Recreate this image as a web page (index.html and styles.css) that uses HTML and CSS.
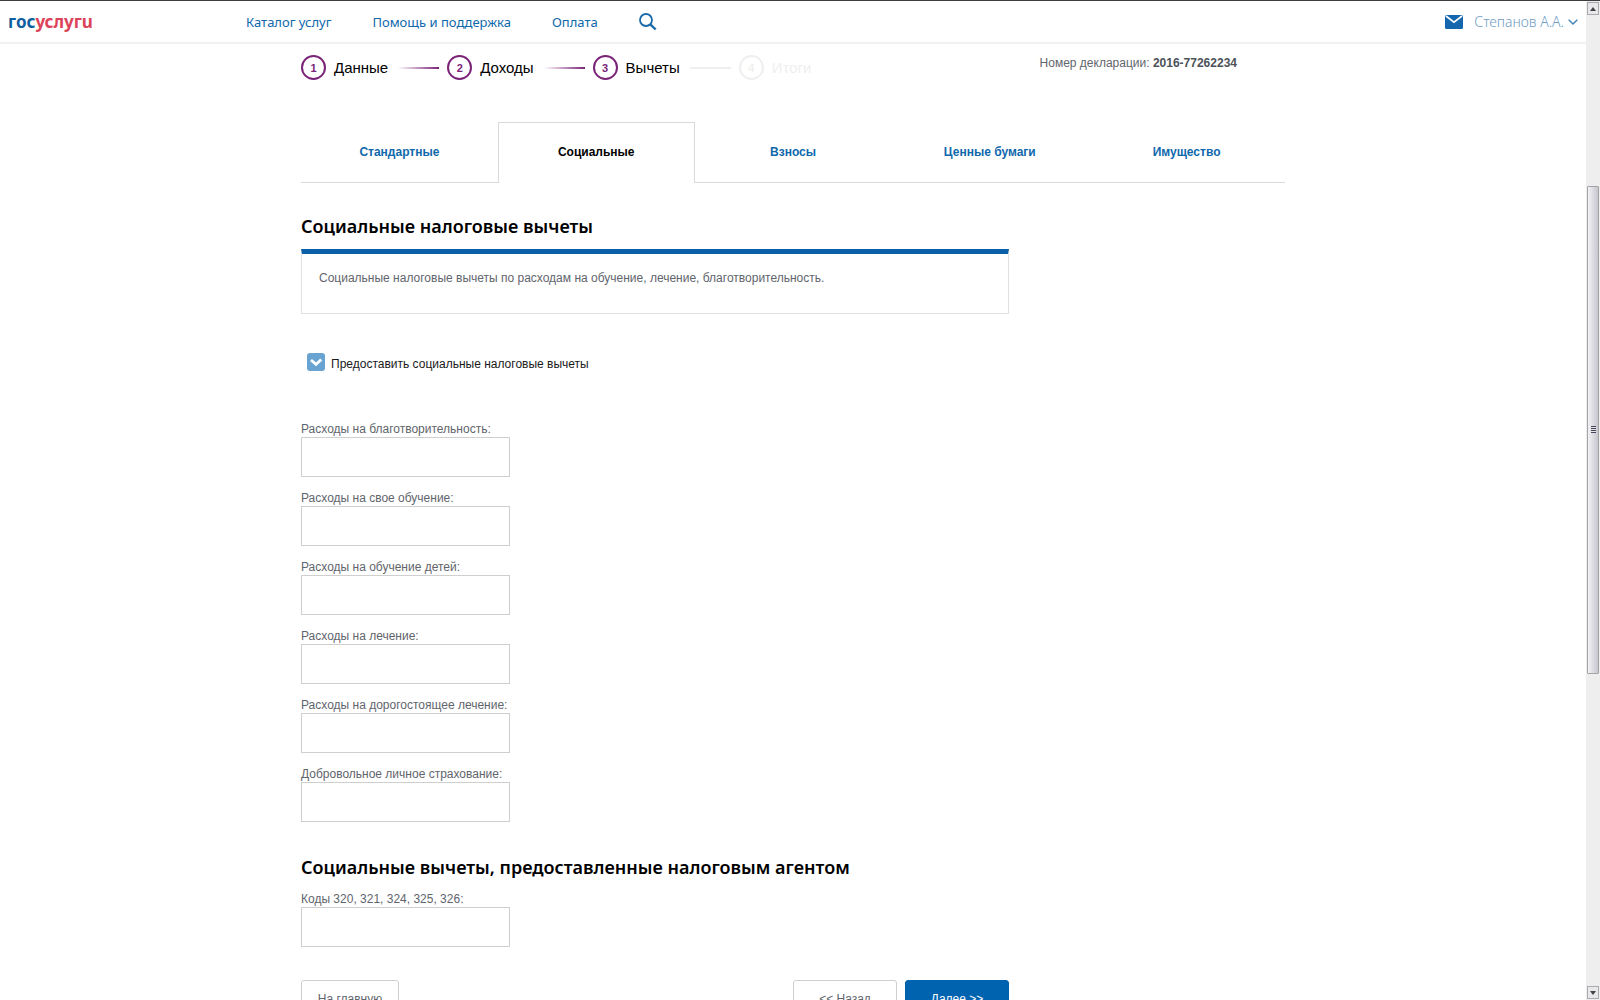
FILE: index.html
```html
<!DOCTYPE html>
<html lang="ru">
<head>
    <meta charset="UTF-8">
    <meta name="viewport" content="width=device-width, initial-scale=1.0">
    <title>Социальные налоговые вычеты</title>
    <link rel="stylesheet" href="styles.css">
</head>
<body>
    <div class="page">
        <header class="header">
            <a href="#" class="logo"><span class="logo-blue">гос</span><span class="logo-red">услугu</span></a>
            <nav class="nav">
                <a href="#">Каталог услуг</a>
                <a href="#">Помощь и поддержка</a>
                <a href="#">Оплата</a>
                <button type="button" class="search-btn" aria-label="Поиск">
                    <svg width="18" height="18" viewBox="0 0 18 18" fill="none" stroke="#1a6aa9" stroke-width="1.8">
                        <circle cx="7" cy="7" r="6"/>
                        <path d="M11.3 11.3l5.4 5.2" stroke-width="2.4"/>
                    </svg>
                </button>
            </nav>
            <div class="user">
                <a href="#" class="mail" aria-label="Сообщения">
                    <svg width="18" height="14" viewBox="0 0 18 14">
                        <rect width="18" height="14" rx="1.5" fill="#1567ad"/>
                        <path d="M1 1l8 6.2L17 1" fill="none" stroke="#fff" stroke-width="1.6"/>
                    </svg>
                </a>
                <a href="#" class="user-name">Степанов А.А.
                    <svg width="10" height="6" viewBox="0 0 10 6" fill="none" stroke="#3d82b8" stroke-width="1.4">
                        <path d="M.7.7L5 5 9.3.7"/>
                    </svg>
                </a>
            </div>
        </header>

        <main class="container">
            <div class="top-row">
                <ol class="steps">
                    <li class="step"><span class="num">1</span>Данные</li>
                    <li class="step"><span class="num">2</span>Доходы</li>
                    <li class="step"><span class="num">3</span>Вычеты</li>
                    <li class="step disabled"><span class="num">4</span>Итоги</li>
                </ol>
                <div class="doc-number">Номер декларации: <b>2016-77262234</b></div>
            </div>

            <nav class="tabs">
                <a href="#" class="tab">Стандартные</a>
                <a href="#" class="tab active">Социальные</a>
                <a href="#" class="tab">Взносы</a>
                <a href="#" class="tab">Ценные бумаги</a>
                <a href="#" class="tab">Имущество</a>
            </nav>

            <form class="form">
                <h2>Социальные налоговые вычеты</h2>
                <div class="info">Социальные налоговые вычеты по расходам на обучение, лечение, благотворительность.</div>

                <label class="check">
                    <input type="checkbox" checked>
                    <svg class="check-mark" width="18" height="18" viewBox="0 0 18 18" fill="none" stroke="#fff" stroke-width="2.8">
                        <path d="M4 7l5 4.4L14.2 6.4"/>
                    </svg>
                    <span>Предоставить социальные налоговые вычеты</span>
                </label>

                <div class="fields">
                    <div class="field">
                        <label for="charity">Расходы на благотворительность:</label>
                        <input type="text" id="charity">
                    </div>
                    <div class="field">
                        <label for="ownStudy">Расходы на свое обучение:</label>
                        <input type="text" id="ownStudy">
                    </div>
                    <div class="field">
                        <label for="childStudy">Расходы на обучение детей:</label>
                        <input type="text" id="childStudy">
                    </div>
                    <div class="field">
                        <label for="treatment">Расходы на лечение:</label>
                        <input type="text" id="treatment">
                    </div>
                    <div class="field">
                        <label for="costlyTreatment">Расходы на дорогостоящее лечение:</label>
                        <input type="text" id="costlyTreatment">
                    </div>
                    <div class="field">
                        <label for="insurance">Добровольное личное страхование:</label>
                        <input type="text" id="insurance">
                    </div>
                </div>

                <h2 class="agent-title">Социальные вычеты, предоставленные налоговым агентом</h2>
                <div class="field">
                    <label for="codes">Коды 320, 321, 324, 325, 326:</label>
                    <input type="text" id="codes">
                </div>

                <div class="buttons">
                    <button type="button" class="btn btn-home">На главную</button>
                    <button type="button" class="btn">&lt;&lt; Назад</button>
                    <button type="submit" class="btn btn-next">Далее &gt;&gt;</button>
                </div>
            </form>
        </main>
    </div>

    <!-- Scrollbar -->
    <div class="scrollbar" aria-hidden="true">
        <div class="scroll-arrow"><svg width="6" height="4" viewBox="0 0 6 4"><path d="M0 4l3-4 3 4z" fill="#444"/></svg></div>
        <div class="scroll-space-top"></div>
        <div class="scroll-thumb"><span class="grip"></span></div>
        <div class="scroll-space-bottom"></div>
        <div class="scroll-arrow"><svg width="6" height="4" viewBox="0 0 6 4"><path d="M0 0l3 4 3-4z" fill="#444"/></svg></div>
    </div>
</body>
</html>
```

FILE: styles.css
```css
* {
    box-sizing: border-box;
}

body {
    margin: 0;
    height: 100vh;
    display: flex;
    overflow: hidden;
    border-top: 1px solid #3c3b40;
    background: #fff;
    font-family: "Liberation Sans", Arial, sans-serif;
    font-size: 12px;
    line-height: 16px;
    color: #5f656c;
}

a {
    color: #0f68ac;
    text-decoration: none;
}

.page {
    flex: 1;
    min-width: 0;
    overflow: hidden;
}

/* Header */
.header {
    display: flex;
    align-items: center;
    height: 43px;
    padding: 0 8px;
    border-bottom: 2px solid #f2f2f2;
    font-family: "Noto Sans", sans-serif;
    font-size: 13px;
    line-height: 20px;
}

.logo {
    width: 238px;
    font-size: 17px;
    font-weight: 700;
}

.logo-blue {
    color: #0f5f9f;
}

.logo-red {
    color: #dc4359;
}

.nav {
    display: flex;
    align-items: center;
    gap: 41px;
}

.search-btn {
    display: flex;
    padding: 0;
    border: none;
    background: none;
    cursor: pointer;
}

.user {
    display: flex;
    align-items: center;
    gap: 11px;
    margin-left: auto;
}

.mail {
    display: flex;
}

.user-name {
    display: flex;
    align-items: center;
    gap: 4px;
    font-size: 14px;
    font-weight: 300;
    color: #6e9cc4;
}

/* Steps */
.container {
    max-width: 984px;
    margin: 0 auto;
}

.top-row {
    display: flex;
    justify-content: space-between;
    padding: 11px 48px 0 0;
}

.steps {
    display: flex;
    gap: 10px;
    margin: 0;
    padding: 0;
    list-style: none;
    font-size: 15px;
    color: #000;
}

.step {
    display: flex;
    align-items: center;
    gap: 8px;
    height: 25px;
}

.step + .step::before {
    content: "";
    width: 41px;
    height: 2px;
    background: linear-gradient(to right, #fff, #7a2478);
}

.num {
    display: flex;
    align-items: center;
    justify-content: center;
    width: 25px;
    height: 25px;
    border: 2px solid #7a2478;
    border-radius: 50%;
    font-size: 11px;
    font-weight: 700;
    color: #7a2478;
}

.step.disabled,
.step.disabled .num {
    color: #efefef;
    border-color: #efefef;
}

.step.disabled::before {
    background: #efefef;
}

.doc-number b {
    color: #4c5258;
}

/* Tabs */
.tabs {
    display: grid;
    grid-template-columns: repeat(5, 1fr);
    margin-top: 42px;
}

.tab {
    height: 61px;
    border-bottom: 1px solid #d9d9d9;
    line-height: 61px;
    font-weight: 700;
    text-align: center;
}

.tab.active {
    border: 1px solid #d9d9d9;
    border-bottom: none;
    line-height: 59px;
    color: #000;
}

/* Form */
.form {
    max-width: 708px;
    padding-top: 29px;
}

h2 {
    margin: 0;
    font-family: "Noto Sans", sans-serif;
    font-size: 18px;
    font-weight: 600;
    line-height: 28px;
    color: #000;
}

.info {
    height: 65px;
    margin-top: 9px;
    padding: 16px 17px;
    border: 1px solid #e0e0e0;
    border-top: 5px solid #0a60a8;
}

.check {
    display: flex;
    align-items: center;
    gap: 6px;
    position: relative;
    margin: 38px 0 0 6px;
    color: #1a1a1a;
}

.check span {
    padding-top: 4px;
}

.check input {
    appearance: none;
    width: 18px;
    height: 18px;
    margin: 0;
    border-radius: 3px;
    background: #68a3d1;
}

.check-mark {
    position: absolute;
    left: 0;
    top: 1px;
}

.fields {
    display: flex;
    flex-direction: column;
    gap: 13px;
    margin-top: 49px;
}

.field label {
    display: block;
}

.field input {
    display: block;
    width: 209px;
    height: 40px;
    padding: 0 10px;
    border: 1px solid #cfcfcf;
    font-size: 12px;
}

.agent-title {
    margin: 31px 0 10px;
}

.buttons {
    display: flex;
    gap: 8px;
    margin-top: 33px;
}

.btn {
    width: 104px;
    height: 38px;
    border: 1px solid #cfcfcf;
    border-radius: 3px;
    background: #fff;
    font-family: inherit;
    font-size: 12px;
    color: #5f656c;
    cursor: pointer;
}

.btn-home {
    width: 98px;
    margin-right: auto;
}

.btn-next {
    border-color: #0063b0;
    background: #0063b0;
    color: #fff;
}

/* Scrollbar */
.scrollbar {
    display: flex;
    flex-direction: column;
    width: 14px;
    padding: 1px;
    background: #eee;
}

.scroll-arrow {
    display: flex;
    align-items: center;
    justify-content: center;
    height: 13px;
    border: 1px solid #aaa;
    background: #e8e8ec;
}

.scroll-space-top {
    flex: 171;
}

.scroll-thumb {
    display: flex;
    align-items: center;
    justify-content: center;
    flex: 487;
    border: 1px solid #a3a3a6;
    border-radius: 1px;
    background: linear-gradient(to right, #f3f3f6, #dcdce2 50%, #c6c6cc);
}

.scroll-space-bottom {
    flex: 313;
}

.grip {
    width: 5px;
    height: 7px;
    background: repeating-linear-gradient(#44445a 0 1px, #e4e4e8 1px 2px);
}
```
